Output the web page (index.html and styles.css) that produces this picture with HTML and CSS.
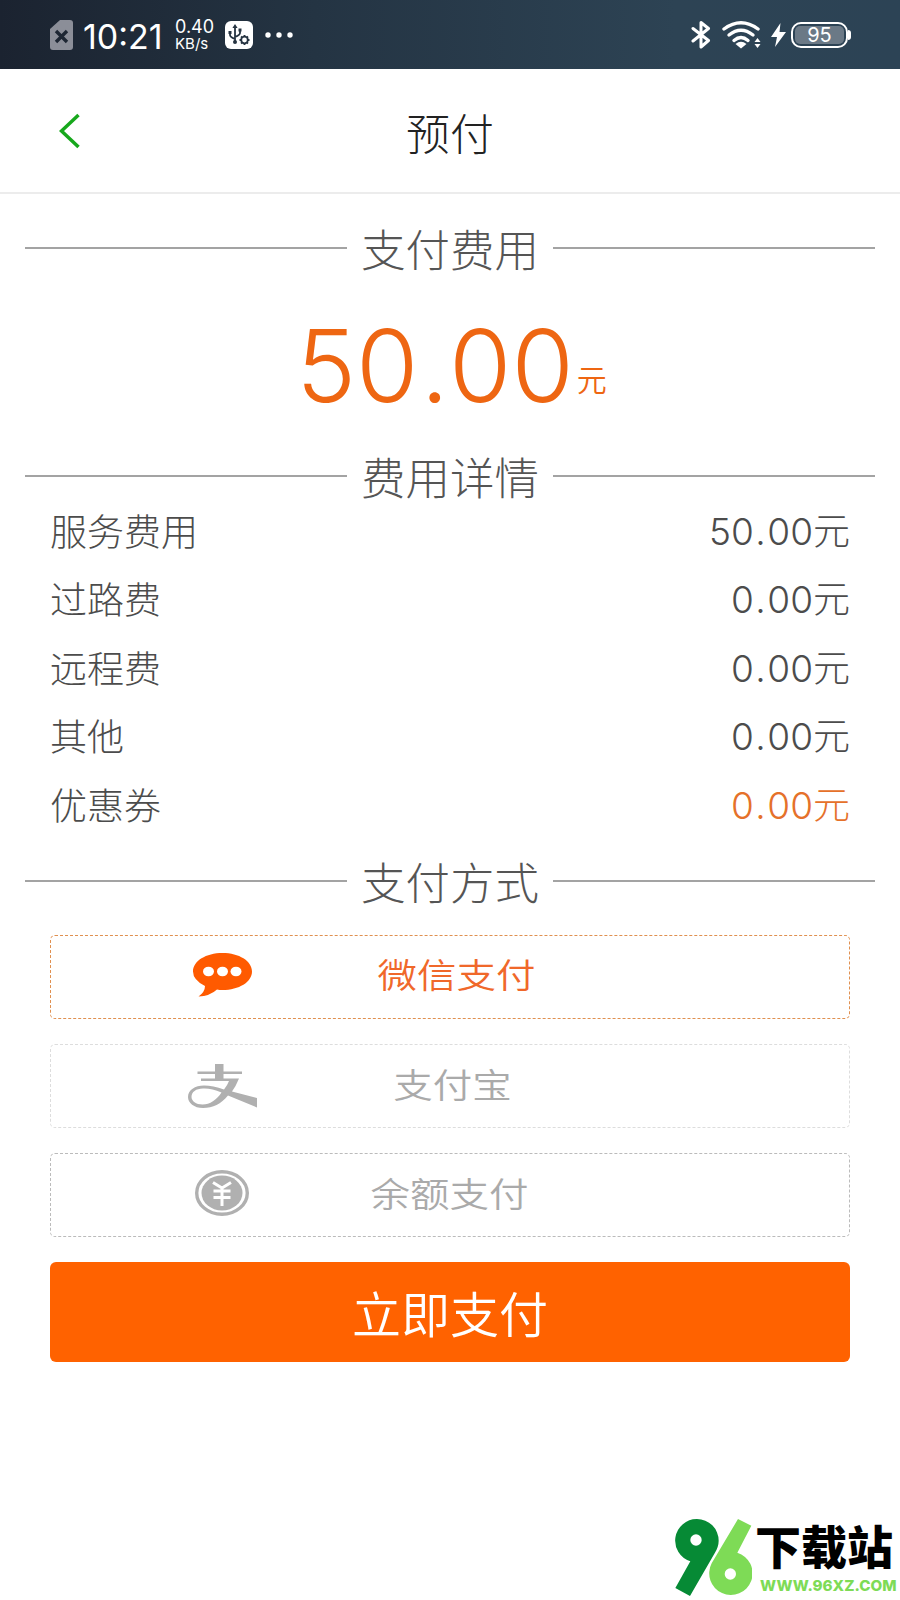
FILE: index.html
```html
<!DOCTYPE html>
<html lang="zh-CN">
<head>
    <meta charset="UTF-8">
    <title>预付</title>
    <link rel="stylesheet" href="styles.css">
</head>
<body>
    <div class="status-bar">
        <svg class="sim-icon" width="23" height="30" viewBox="0 0 23 30">
            <path d="M10 0H20Q23 0 23 3V27Q23 30 20 30H3Q0 30 0 27V9Z" fill="#8b8e98"/>
            <path d="M6 11L17 22M17 11L6 22" stroke="#1d2633" stroke-width="3.4"/>
        </svg>
        <span class="time">10:21</span>
        <div class="speed">
            <span class="speed-value">0.40</span>
            <span class="speed-unit">KB/s</span>
        </div>
        <svg class="usb-icon" width="28" height="28" viewBox="0 0 28 28">
            <rect width="28" height="28" rx="6" fill="#fff"/>
            <g stroke="#263442" stroke-width="1.8" fill="none">
                <path d="M10 5V21M5 11V14Q5 16 10 18M15 9V12Q15 14 10 16"/>
                <circle cx="19.5" cy="19" r="3.3"/>
                <path d="M19.5 14V16M19.5 22V24M14.5 19H16.5M22.5 19H24.5M16 15.5L17.2 16.7M21.8 21.3L23 22.5M23 15.5L21.8 16.7M17.2 21.3L16 22.5"/>
            </g>
            <path d="M10 3L12.6 7H7.4ZM3.5 10H6.5V13H3.5ZM13.5 7.5H16.5V10.5H13.5Z" fill="#263442"/>
            <circle cx="10" cy="21" r="2" fill="#263442"/>
        </svg>
        <svg class="more-icon" width="30" height="8" viewBox="0 0 30 8">
            <circle cx="4" cy="4" r="2.7" fill="#fff"/>
            <circle cx="15" cy="4" r="2.7" fill="#fff"/>
            <circle cx="26" cy="4" r="2.7" fill="#fff"/>
        </svg>
        <div class="status-right">
            <svg class="bluetooth-icon" width="20" height="30" viewBox="0 0 20 30">
                <path d="M2 8.500L17.500 20.500L10 27V2.500L17.500 8.500L2 21" fill="none" stroke="#fff" stroke-width="3" stroke-linejoin="round" stroke-linecap="round"/>
            </svg>
            <svg class="wifi-icon" width="39" height="28" viewBox="0 0 39 28">
                <g fill="none" stroke="#fff" stroke-width="3.4" stroke-linecap="round">
                    <path d="M2 8Q19 -4.500 36 8"/>
                    <path d="M7 14Q19 4.500 31 14"/>
                    <path d="M12 19.500Q19 13.500 26 19.500"/>
                </g>
                <path d="M13.500 23Q19 18.500 24.500 23L19 27.500Z" fill="#fff"/>
                <path d="M35.500 17L38.500 21H32.500ZM32.500 23H38.500L35.500 27Z" fill="#fff"/>
            </svg>
            <svg class="bolt-icon" width="15" height="24" viewBox="0 0 15 24">
                <path d="M9.500 0L0 14H6L4 24L15 9H8.500Z" fill="#fff"/>
            </svg>
            <div class="battery"><span class="battery-level">95</span></div>
            <div class="battery-cap"></div>
        </div>
    </div>

    <div class="header">
        <svg class="back-icon" width="22" height="36" viewBox="0 0 22 36">
            <path d="M19.500 2L2.500 18L19.500 34" fill="none" stroke="#17a81c" stroke-width="3.5"/>
        </svg>
        <h1>预付</h1>
    </div>

    <div class="divider divider-cost"><span>支付费用</span></div>
    <div class="amount">50<span class="dot">.</span>00<span class="amount-unit">元</span></div>

    <div class="divider divider-detail"><span>费用详情</span></div>
    <div class="detail">
        <div class="row"><span>服务费用</span><span class="price">50<span class="dot">.</span>00元</span></div>
        <div class="row"><span>过路费</span><span class="price">0<span class="dot">.</span>00元</span></div>
        <div class="row"><span>远程费</span><span class="price">0<span class="dot">.</span>00元</span></div>
        <div class="row"><span>其他</span><span class="price">0<span class="dot">.</span>00元</span></div>
        <div class="row"><span>优惠券</span><span class="price coupon">0<span class="dot">.</span>00元</span></div>
    </div>

    <div class="divider divider-method"><span>支付方式</span></div>
    <div class="methods">
        <div class="method active">
            <div class="method-icon">
                <svg width="59" height="44" viewBox="0 0 59 44">
                    <path d="M29.500 0C46 0 59 8 59 18.500S46 37 29.500 37Q26.500 37 24 36.500Q17 43 5.500 43.500Q12 39 12 33Q0 27 0 18.500C0 8 13 0 29.500 0Z" fill="#ff5a00"/>
                    <ellipse cx="15.500" cy="18.500" rx="5.500" ry="4.800" fill="#fff"/>
                    <ellipse cx="29.500" cy="18.500" rx="5.500" ry="4.800" fill="#fff"/>
                    <ellipse cx="43" cy="18.500" rx="5.500" ry="4.800" fill="#fff"/>
                </svg>
            </div>
            <span class="method-name">微信支付</span>
        </div>
        <div class="method alipay">
            <div class="method-icon">
                <svg width="69" height="44" viewBox="0 0 69 44">
                    <path d="M27 0H35.500V7.500H54V10H35.500V14.500H51Q48 22 44 27.500L69 34V43.500L40 31.500C33 40 25 44 15 44C6 44 0 39 0 33C0 26 7 21.500 16 21.500Q25 21.500 36 25.500Q39.500 21 41 17H13V14.500H27V10H9.500V7.500H27Z" fill="#b0b0b0"/>
                    <path d="M33.500 28.500Q23 24 15 24.500C8 24.500 3.500 28 3.500 33C3.500 37 8 40.500 14.500 40.500C22 40.500 28.500 36 33.500 28.500Z" fill="#fff"/>
                </svg>
            </div>
            <span class="method-name">支付宝</span>
        </div>
        <div class="method balance">
            <div class="method-icon">
                <svg width="54" height="46" viewBox="0 0 54 46">
                    <ellipse cx="27" cy="23" rx="25.300" ry="21.300" fill="none" stroke="#b0b0b0" stroke-width="3.400"/>
                    <ellipse cx="27" cy="23" rx="20.500" ry="17.500" fill="#b0b0b0"/>
                    <path d="M18 12.500L27 18L36 12.500M18.500 21H35.500M18.500 27.500H35.500M27 18V36" fill="none" stroke="#fff" stroke-width="3"/>
                </svg>
            </div>
            <span class="method-name">余额支付</span>
        </div>
        <button class="pay-button">立即支付</button>
    </div>

    <div class="watermark">
        <svg width="77" height="77" viewBox="0 0 231 231">
            <path d="M66 0A65 65 0 0 0 46 127L1 207L45 231L119 103Q131 83 131 65A65 65 0 0 0 66 0Z" fill="#068a35"/>
            <circle cx="63" cy="63" r="17" fill="#fff"/>
            <path d="M189 0L229 20L187 101A65 65 0 1 1 110 133Z" fill="#7edb56"/>
            <circle cx="166" cy="165" r="17" fill="#fff"/>
        </svg>
        <div class="watermark-text">
            <span class="site-name">下载站</span>
            <span class="site-url">WWW.96XZ.COM</span>
        </div>
    </div>
</body>
</html>
```
FILE: styles.css
```css
* {
    box-sizing: border-box;
}

body {
    font-family: "Noto Sans CJK SC", sans-serif;
    font-weight: 300;
    background-color: #ffffff;
    color: #4c4c4c;
    margin: 0;
    padding: 0;
    height: 1600px;
    position: relative;
    overflow: hidden;
}

svg {
    display: block;
    flex: none;
}

.status-bar {
    display: flex;
    align-items: center;
    height: 69px;
    padding: 0 49px 0 50px;
    background: linear-gradient(90deg, #1b2330 0%, #243443 35%, #2d4354 75%, #2c4355 100%);
    color: #ffffff;
    font-family: Inter, sans-serif;
    font-weight: 400;
}

.time {
    width: 80px;
    margin-left: 10px;
    margin-top: 3px;
    font-size: 34px;
    white-space: nowrap;
}

.speed {
    display: flex;
    flex-direction: column;
    width: 39px;
    margin-left: 12px;
    margin-top: 1px;
    line-height: 17px;
}

.speed-value {
    font-size: 18px;
}

.speed-unit {
    font-size: 15px;
}

.usb-icon {
    margin-left: 11px;
}

.more-icon {
    margin-left: 11px;
}

.status-right {
    display: flex;
    align-items: center;
    margin-left: auto;
}

.wifi-icon {
    margin-left: 11px;
}

.bolt-icon {
    margin-left: 10px;
}

.battery {
    width: 57px;
    height: 26px;
    margin-left: 5px;
    padding: 2px;
    border: 2px solid #ffffff;
    border-radius: 10px;
}

.battery-level {
    display: block;
    height: 18px;
    border-radius: 5px;
    background-color: #6b7986;
    font-size: 20px;
    line-height: 18px;
    text-align: center;
}

.battery-cap {
    width: 3px;
    height: 10px;
    background-color: #ffffff;
    border-radius: 0 3px 3px 0;
}

.header {
    display: flex;
    align-items: center;
    height: 125px;
    padding: 0 59px;
    border-bottom: 2px solid #ececec;
}

.header h1 {
    flex: 1;
    margin: 2px 22px 0 0;
    font-size: 44px;
    font-weight: 300;
    line-height: 60px;
    text-align: center;
    color: #222222;
}

.divider {
    display: flex;
    align-items: center;
    height: 60px;
    margin: 0 25px;
    font-size: 44.5px;
    line-height: 60px;
    color: #555555;
}

.divider::before,
.divider::after {
    content: "";
    flex: 1;
    height: 2px;
    background-color: #a3a3a3;
}

.divider span {
    width: 206px;
    text-align: center;
    white-space: nowrap;
}

.divider-cost {
    margin-top: 24px;
}

.amount {
    display: flex;
    justify-content: center;
    align-items: baseline;
    height: 168px;
    padding-left: 3px;
    font-family: Inter, sans-serif;
    font-size: 101px;
    font-weight: 350;
    line-height: 174px;
    color: #ee6612;
}

.amount .dot {
    padding: 0 1px 0 2px;
    margin-right: -1px;
}

.amount-unit {
    font-family: "Noto Sans CJK SC", sans-serif;
    font-size: 30px;
    line-height: 40px;
    margin-left: 3px;
    transform: translateY(-11px);
}

.detail {
    padding: 0 50px;
    margin-top: -10px;
}

.row {
    display: flex;
    justify-content: space-between;
    height: 68.4px;
    font-size: 37px;
    line-height: 68px;
}

.price {
    font-family: Inter, "Noto Sans CJK SC", sans-serif;
    padding-top: 2px;
}

.price .dot {
    padding: 0 1.5px;
}

.coupon {
    color: #e5712a;
}

.divider-method {
    margin-top: 13px;
}

.methods {
    display: flex;
    flex-direction: column;
    gap: 25px;
    padding: 24.5px 50px 0;
}

.method {
    display: flex;
    align-items: center;
    height: 84px;
    padding-bottom: 4px;
    border: 1px dashed #bbbbbb;
    border-radius: 5px;
    color: #aaaaaa;
    font-weight: 350;
}

.method-icon {
    display: flex;
    justify-content: center;
    width: 342px;
}

.method-name {
    width: 127px;
    display: flex;
    justify-content: center;
    margin-bottom: 8px;
    font-size: 39.5px;
    line-height: 50px;
    white-space: nowrap;
    transform: scaleY(0.86);
}

.active {
    border-color: #e09050;
    color: #f0682a;
}

.active .method-name {
    margin-bottom: 5px;
}

.alipay {
    padding-bottom: 0;
    border-color: #dddddd;
}

.alipay .method-name {
    margin-left: -4px;
    margin-bottom: 6px;
}

.balance .method-name {
    margin-left: -7px;
    margin-bottom: 2px;
}

.pay-button {
    height: 100px;
    margin: 0;
    padding: 0 0 1px;
    border: none;
    border-radius: 6px;
    background-color: #ff6200;
    color: #ffffff;
    font-family: inherit;
    font-size: 49px;
    font-weight: 350;
}

.watermark {
    position: absolute;
    left: 675px;
    top: 1519px;
    display: flex;
}

.watermark-text {
    display: flex;
    flex-direction: column;
    margin-left: 3px;
}

.site-name {
    font-size: 46px;
    font-weight: 900;
    line-height: 50px;
    color: #000000;
    white-space: nowrap;
}

.site-url {
    margin-left: 5px;
    font-family: Inter, sans-serif;
    font-size: 15.2px;
    font-weight: 800;
    line-height: 34px;
    color: #7edb56;
    white-space: nowrap;
}
```
